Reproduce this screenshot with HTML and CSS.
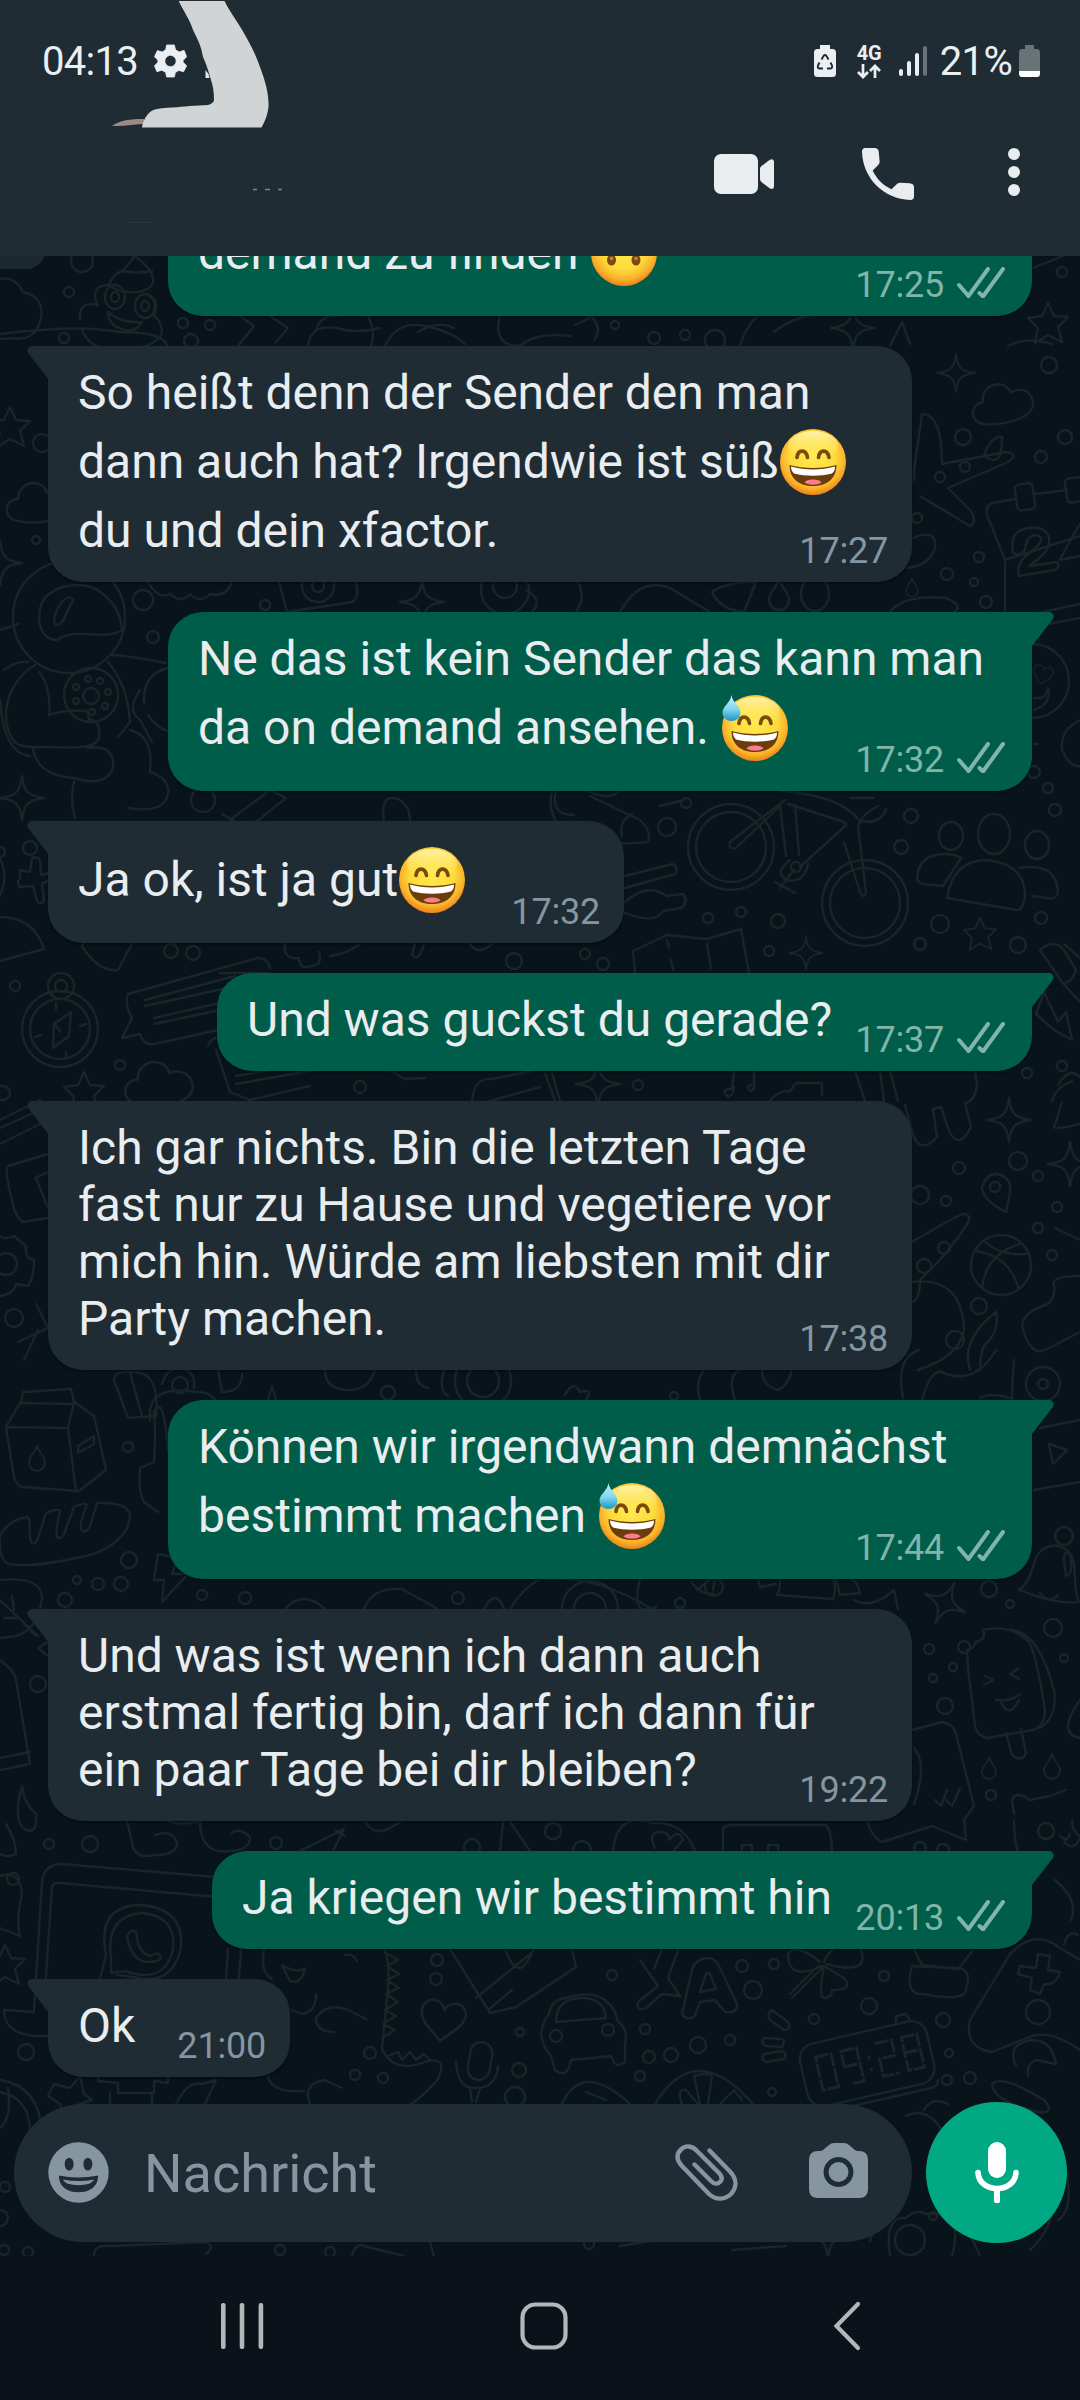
FILE: index.html
```html
<!DOCTYPE html>
<html lang="de">
<head>
<meta charset="utf-8">
<title>Chat</title>
<link rel="stylesheet" href="styles.css">
</head>
<body>
<svg class="defs" width="0" height="0" aria-hidden="true">
  <defs>
    <radialGradient id="face" cx="50%" cy="42%" r="56%">
      <stop offset="0" stop-color="#ffe94f"/><stop offset=".6" stop-color="#fddb3c"/><stop offset=".86" stop-color="#fbb22a"/><stop offset="1" stop-color="#f08a1c"/>
    </radialGradient>
    <linearGradient id="shine" x1="0" y1="0" x2="0" y2="1">
      <stop offset="0" stop-color="#fff3b0" stop-opacity=".95"/><stop offset="1" stop-color="#ffe94f" stop-opacity="0"/>
    </linearGradient>
    <linearGradient id="drop" x1="0" y1="0" x2="0" y2="1">
      <stop offset="0" stop-color="#c4f1fb"/><stop offset=".55" stop-color="#7fd6ee"/><stop offset="1" stop-color="#1795c4"/>
    </linearGradient>
    <symbol id="grin" viewBox="0 0 66 66">
      <circle cx="33" cy="33" r="33" fill="url(#face)"/>
      <ellipse cx="33" cy="17" rx="25" ry="15" fill="url(#shine)"/>
      <path d="M17 28.500c1-8.500 9-8.500 10.500 0M38.500 28.500c1-8.500 9-8.500 10.500 0" fill="none" stroke="#7c4a08" stroke-width="3.600" stroke-linecap="round"/>
      <path d="M9.500 36c14 4 33 4 47 0c0 14-10 21-23.500 21s-23.500-7-23.500-21z" fill="#6b3d0c"/>
      <path d="M11 37.500c14 4 30 4 44 0c0 4-1 5-3 7c-12 3-26 3-38 0c-2-2-3-4-3-7z" fill="#fff"/>
      <path d="M24.500 53.500c2-4 15-4 17 0c-5 3-12 3-17 0z" fill="#fb7c8c"/>
    </symbol>
    <symbol id="sweat" viewBox="0 0 66 66">
      <use href="#grin" width="66" height="66"/>
      <path d="M9.500 0c1 8 9 11 9 18a9 8 0 0 1-18 0c0-7 8-10 9-18z" fill="url(#drop)"/>
    </symbol>
    <symbol id="upside" viewBox="0 0 66 66">
      <circle cx="33" cy="33" r="33" fill="url(#face)"/>
      <ellipse cx="20.500" cy="40" rx="4.500" ry="5.500" fill="#7a4a10"/><ellipse cx="45" cy="40" rx="4.500" ry="5.500" fill="#7a4a10"/>
      <circle cx="20.500" cy="38.500" r="1.800" fill="#b98642"/><circle cx="45" cy="38.500" r="1.800" fill="#b98642"/>
      <path d="M16 22c7-10 27-10 34 0" fill="none" stroke="#7a4a10" stroke-width="3"/>
    </symbol>
    <symbol id="ticks" viewBox="0 0 48 31">
      <path d="M2 18l9.500 11L31 2M22.500 26l3.500 3.500L46 2" fill="none" stroke="#80b5a9" stroke-width="4" stroke-linecap="round" stroke-linejoin="miter"/>
    </symbol>
    <symbol id="tail" viewBox="0 0 22 34">
      <path d="M0 0H16.500C21 0 23 4 20.500 7.500L0 34z" fill="currentColor"/>
    </symbol>
    <path id="spark" d="M0-22C2-6 6-2 22 0C6 2 2 6 0 22C-2 6-6 2-22 0C-6-2-2-6 0-22z"/>
    <path id="star" d="M0-20l6 13 14 1-10 10 4 15-14-7-13 8 3-15-10-10 14-2z"/>
    <path id="cloud" d="M-24 18c-16-2-14-22 0-22c0-18 24-22 29-6c18-6 26 12 18 20c-6 8-28 12-47 8z"/>
    <path id="bolt" d="M-12-24l20 4-6 16h16l-26 28 2-22h-10z"/>
    <path id="dropline" d="M0-15c2 9 10 12 10 21a10 10 0 0 1-20 0c0-9 8-12 10-21z"/>
    <path id="heart" d="M0 20c-10-10-22-16-20-28c3-12 18-10 20 0c4-10 18-10 20 1c1 10-10 17-20 27z"/>
    <path id="bell" d="M-30 24c8-6 10-14 13-30c5-24 36-24 40 2c3 14 2 22 8 34c-20 4-40 0-61-6z"/>
  </defs>
</svg>

<div class="phone">
  <header class="header">
    <div class="status">
      <span class="clock">04:13</span>
      <svg class="gear" viewBox="0 0 34 34"><path fill-rule="evenodd" fill="#eceff1" stroke="#eceff1" stroke-width=".8" stroke-linejoin="round" d="M13 .5h8l1.200 5 3.800 2.200L31 6l2.600 6.500-3.600 3.900v2l3.600 3.600-3.100 6-5-1.300-3.500 2.200L21 33.500h-8l-1-4.800-4-2.200-5 1.500L.5 22 4 18.400v-2.200L.5 12.500 3.500 6.300 8.400 7.700 12 5.500zM17 11.200a5.800 5.800 0 1 0 .01 0z"/></svg>
      <div class="status-right">
        <svg class="saver" viewBox="0 0 22 32"><path fill="#eceff1" d="M6 0h10v4h2.500Q22 4 22 7.500v21Q22 32 18.500 32h-15Q0 32 0 28.500v-21Q0 4 3.500 4H6z"/><g fill="none" stroke="#1f2c34" stroke-width="1.900"><path d="M7.500 14.500l2-3.500q1.500-2 3 0l2 3.500M16.500 17.500l1.500 3q.8 3-2 3h-3M9 23.500H6q-3-.3-2-3l1.500-3"/></g></svg>
        <div class="net"><span>4G</span><svg viewBox="0 0 24 15"><path fill="none" stroke="#eceff1" stroke-width="2.700" d="M6 0v12M1 8l5 5 5-5M18 14V3M13 7l5-5 5 5"/></svg></div>
        <svg class="signal" viewBox="0 0 28 31"><g fill="#eceff1"><rect y="23" width="4" height="7" rx="2"/><rect x="8" y="15" width="4" height="15" rx="2"/><rect x="16" y="7" width="4" height="23" rx="2"/></g><rect x="24" width="4" height="30" rx="2" fill="#697277"/></svg>
        <span class="percent">21%</span>
        <svg class="battery" viewBox="0 0 21 32"><path fill="#697277" d="M6 0h9v4h3q3 0 3 4v18H0V8q0-4 3-4h3z"/><path fill="#fff" d="M0 26h21v2.500Q21 32 18 32H3q-3 0-3-3.500z"/></svg>
      </div>
    </div>
    <div class="toolbar">
      <svg class="video" viewBox="0 0 60 40"><rect width="44" height="40" rx="7" fill="#e9edef"/><path fill="#e9edef" d="M46 14.500q0-1.500 1.500-2.500l8-6Q60 4 60 8v24q0 4-4 2.500l-8-6Q46 27 46 25z"/></svg>
      <svg class="call" viewBox="3 3 18 18"><path fill="#e9edef" d="M3.900 3H7.400Q8.600 3 8.800 4.300L9.100 7.700Q9.100 8.400 8.600 8.900L6.700 10.800C8.200 13.900 10.100 15.800 13.200 17.300L15.100 15.500Q15.500 15 16.300 15L19.500 15.200Q21 15.300 21 16.700V19.700Q21 21 19.700 21C10.500 20.700 3.300 13.500 3 4.300Q3 3.200 3.900 3z"/></svg>
      <svg class="more" viewBox="0 0 12 48"><g fill="#e9edef"><circle cx="6" cy="6" r="6"/><circle cx="6" cy="24" r="6"/><circle cx="6" cy="42" r="6"/></g></svg>
    </div>
    <svg class="scribble" viewBox="0 0 300 270" aria-hidden="true">
      <path d="M0 250h52q-5 2-9 9t-13 10H0z" fill="#1c2930"/><path d="M0 240h60v16H0z" fill="#1f2c34"/>
      <path d="M0 117q60 9 110 10" fill="none" stroke="#232f37"/>
      <path d="M112 126c8-6 18-7 32-7v5c-9 0-13 2-32 2z" fill="#9c8988"/>
      <path d="M205.500 70v8h4l-1-4z" fill="#e4e7e8"/>
      <path d="M178.700 1H224.500C231 14 238 22 245 35C252 47 257 58 260 67C266 83 269 95 268.500 107C267 117 265 121 261.500 127.500H142C143 119 149 110 157 109C170 107 186 107 190 106L208 105Q214 103 214 100C214 92 213 86 211 80C209 73 206 63 203 57C201 45 197 38 193 30C190 20 184 12 178.700 1z" fill="#d0d4d5"/>
      <path d="M253 189.500h4M265 189.500h5M278 189.500h4" stroke="#7d878c" stroke-width="1.300"/>
      <path d="M128 222.500h22" stroke="#2c363d"/>
    </svg>
  </header>

  <main class="chat">
    <svg class="wallpaper" viewBox="0 256 1080 2000" aria-hidden="true">
      <g class="doodle">
        <path d="M-5 280q20-6 28 12q24 6 17 30q-6 20-30 16q-20 4-25-10"/>
        <path d="M122 271q10-10 12-15q10 6 17 16q6 12-4 17q-16 8-38-3q2-11 13-15q15 3 30 0M97 305q-7-20 12-20M80 320q-2-20 18-15M82 330q10 24 40 17q30 4 40-14q0-12-8-17q6-16-5-20M108 312q14 12 34 10q-8 12-20 7q-14-4-14-17"/>
        <ellipse cx="115" cy="297" rx="10" ry="12"/><ellipse cx="115" cy="297" rx="4" ry="5"/><ellipse cx="145" cy="306" rx="10" ry="12"/><ellipse cx="145" cy="306" rx="4" ry="5"/>
        <path d="M240 316l14 10-16 20M270 316l18 12-12 14M316 330q4-14 20-14M368 316q10 20 0 36M418 332q20-12 36-4M500 316q-8 30 20 30M575 325q14-6 16-9q12 12 3 24M740 346q8-26 24-34M774 332q20-16 40-16"/>
        <path d="M0 334q80-10 120-2 44 0 47 14M308 346q2-22 28-18 20 6 44 0M385 346q12-26 40-20t40 18M520 346q16-14 50-10M890 346l12-24 8 22M1008 346q18-10 44-2"/>
        <use href="#spark" x="853" y="328"/><use href="#star" x="1048" y="323"/><path d="M1033 268l30-12"/>
        <use href="#star" x="10" y="427"/><use href="#cloud" transform="translate(42 503)"/>
        <use href="#spark" x="0" y="563"/><use href="#spark" x="22" y="798"/>
        <circle cx="69" cy="617" r="56"/><path d="M122 630c-20 12-45-4-65 10c-20 0-22-30-12-42c15-16 45-18 60-2c10 8 16 20 17 34M54 622c0-10 8-22 13-24s8 2 4 6c-5 7-5 15-11 20q-5 2-6-2"/>
        <path d="M35 665c-18 10-33 35-28 60s18 22 40 22c20 0 50 4 52-10q2-16-10-18l-2-8q-20-2-38 4c2-20-3-35-10-43M112 655q12 0 54 8M108 662q20 24 22 60l-12 15M33 748q4 28 42 30q-6 20 0 40M75 778q30 10 38-10q2-24-25-20M130 730q24 6 20 42q20 6 18 22q-4 20-40 14M140 690q-14 20 0 30l12 22M168 668q-26 6-24 36M148 715q10 14 20 16M0 630l18-6M4 670q14-10 24-8M0 700q4 54 30 56"/>
        <circle cx="91" cy="695" r="27"/><circle cx="91" cy="696" r="8"/><circle cx="76" cy="687" r="3"/><circle cx="88" cy="679" r="3"/><circle cx="100" cy="681" r="3"/><circle cx="108" cy="692" r="3"/><circle cx="105" cy="706" r="3"/><circle cx="76" cy="701" r="3"/><circle cx="92" cy="712" r="3"/>
        <path d="M148 582q10 18 22 12q12 10 20 0q10 10 20 0q16 4 22-12M279 582l8 30 65-10q8-4 4-20"/><circle cx="318" cy="586" r="16"/><circle cx="318" cy="586" r="6"/>
        <use href="#spark" x="422" y="602"/><circle cx="505" cy="590" r="24"/><circle cx="505" cy="586" r="12"/><path d="M532 612q12-12-6-22M578 582q8 16-2 30M620 612q20-36 50-24l40 24M712 592q14-10 44-10l-12 30q-24-2-32-20z"/>
        <use href="#dropline" x="779" y="594"/><ellipse cx="815" cy="594" rx="14" ry="17"/><use href="#dropline" transform="translate(912 587) scale(.6)"/><path d="M890 612q14-18 56-14q18 8 8 14"/>
        <use href="#spark" transform="translate(956 373) scale(.85)"/><use href="#cloud" transform="translate(1007 403) rotate(-8)"/>
        <path d="M914 480v-10l8-56q20 0 20 50l64-12q14 2 2 10l-60 26 22 22q8 12 0 16l-50-30M984 455q8-20 18-18q0 12-2 18-6 10-16 0M913 538q24-10 22 10q-6 18-28 20"/>
        <path d="M1005 613V560l-18-45q-2-10 6-12l22-4M1035 494l32-4M1005 560l75-24M1005 620l75-16M1005 632l75-14"/>
        <rect x="1016" y="484" width="18" height="26" rx="4" transform="rotate(-8 1024 497)"/><rect x="1066" y="478" width="18" height="24" rx="4" transform="rotate(-8 1074 490)"/>
        <path d="M1013 552q-4-22 16-24q22-2 20 16q-2 10-20 22l28-4q4 5-2 8l-36 6q-4-14 14-26q12-10 6-14q-12-4-14 14q-8 8-12 2zM1080 524q-12 20-20 36l20-4"/>
        <circle cx="1032" cy="681" r="37"/><use href="#heart" transform="translate(1043 674) rotate(12) scale(.5)"/><path d="M1034 698q12 2 14-10q4 16-14 22"/>
        <path d="M1080 720q-20 10-18 30q8 18 18 16M1034 744h4"/>
        <path d="M230 820l40-30 16 8-30 24M222 814l14 8M384 821q-4-28 14-22 12 6 12 22M552 791q-4 18 4 30M620 791q-12 10-32 0M556 791q-6 24 18 24M590 796l50 24q12 12 8 22l-30 2M632 814q-14 8-10 22M660 806l24-6M780 791q60 4 80 30q20 4 26-12M850 798h24"/>
        <circle cx="731" cy="847" r="43"/><circle cx="731" cy="847" r="35"/><circle cx="865" cy="903" r="43"/><circle cx="865" cy="903" r="35"/>
        <path d="M785 800l-55 42q-2 8 6 6l44-42 6 50M795 805l4 50M788 804l56 18q4 2 0 5l-44 40M844 842l16 50q4 8 6 0l-8-66q4-12 20-20M790 860q-16 12-4 20q18 4 22-16M794 870l-14 18M775 882l20 11"/><circle cx="796" cy="867" r="5"/>
        <ellipse cx="994" cy="834" rx="16" ry="20"/><ellipse cx="951" cy="836" rx="12" ry="14"/><ellipse cx="1037" cy="845" rx="12" ry="14"/><path d="M947 898q6-38 40-38q38 4 38 36q-2 14-8 14zM917 878q2-24 28-24q10 0 16 4l-18 28-20-2q-6-2-6-6zM1020 868q36-6 38 24q-2 8-10 6l-16-2"/>
        <use href="#star" transform="translate(980 934) scale(.8)"/><use href="#spark" transform="translate(806 953) scale(.75)"/>
        <path d="M625 876l48-12q6 4 2 10l-50 14M625 902q22-20 42-6l16-2q6 8-2 14l-18 3q-8 14-38 2M635 973l-2-22 34-16 40 4 34-10 8 44M667 940l2 8M671 960l2 10M707 944l4 24"/>
        <path d="M1040 950q14-12 24 0l12 20q-6 16-14 12zM1064 944l16 14M1060 980l20 22M1044 992l14 30 8-10 6 28-18-10-18-16z"/>
        <path d="M20 870l10 2 2-14q6-2 8 2l1 15 12-3q2 8-4 9l-7 2 2 18q-4 4-7 0l-4-15-13 1q-4-6 0-8zM0 858q10 20-3 44M0 917q34 0 44 32l-44 12M82 946l10-20 42 14-16 30q-20 2-36-24M285 944q-2 16 14 14q0 12 12 8q12 0 8-14M330 956q16-2 30-12M415 944l-3 10q6 10 12-10M470 944q8 12 22 0"/>
        <circle cx="60" cy="1029" r="38"/><circle cx="60" cy="1029" r="30"/><circle cx="61" cy="986" r="13"/><circle cx="61" cy="986" r="6"/><path d="M71 1012l-2 24-16 12 1-24zM60 1031l-6-8M56 1003v6M66 1052v6M35 1037l6-2M86 1024l-6 2"/>
        <path d="M220 973l48 0M128 994l130-36q10 0 12 10M128 994q-4 10 4 24l-10 20 18-4q4 12 14 10l64-14M145 1000l90-24M145 1006l100-22M154 1018l70-16M154 1024l66-14"/>
        <use href="#cloud" transform="translate(164 1084) scale(1.1)"/><path d="M208 1046q6-14 18-4M216 1050l14 42 20 8 60-14M236 1076l80-14M236 1084l90-16"/><use href="#star" transform="translate(84 1092)"/>
        <path d="M391 1071l14 8 20-1M472 1101q2-24 20-22l40-8M490 1101l50-14"/>
        <use href="#spark" transform="translate(598 1084)"/><path d="M545 1073l10 28M552 1073l8 28M734 1071l-2 18q-12 0-4 8q6-2 6-10M754 1071v14q-10 0-4 6q6-2 4-6M770 1101q6-10 20-10l6-8h26v12M855 1071l10 30M880 1071l4 30M890 1071l8 30M975 1071l2 14q-2 16-12 18l6 24q-12 24-22 4l-8-24-8 2 4 28q-16 18-24-2l-8-30"/>
        <use href="#spark" transform="translate(1009 1120)"/><path d="M1058 1085q14-24 28 0M1052 1101q4-14 20-20M1054 1128l8-26M1058 1128q10 0 26-6"/><circle cx="1062" cy="1066" r="5"/>
        <use href="#spark" transform="translate(1070 1164)"/><path d="M982 1187q4-14 16-13q14 4 12 18l-4 20q-24-12-24-25z"/><circle cx="995" cy="1187" r="5"/>
        <circle cx="1001" cy="1265" r="30"/><path d="M975 1251q34 4 44 38M1020 1244q-34 10-38 44M984 1240q14 16 42 14"/>
        <path d="M912 1242q30-18 50-28q12 0 4 12q-20 30-46 54q0 20-8 22M912 1282q50-6 52 48q-4 26-46 40M970 1370q-10-30 26-58q4 20-12 34q-4 10-4 24M1055 1228l25 12M1080 1276q-30 0-26 10q2 10-6 18q-30 10-25 26q8 26 22 20l35-18"/><circle cx="944" cy="1248" r="6"/><circle cx="924" cy="1266" r="7"/><circle cx="955" cy="1340" r="9"/>
        <path d="M0 1120l40-20M0 1128l40-18M0 1144l48-24M8 1166l40-12M8 1166q-4 4 4 34q2 14 10 22l26-4M35 1178l13-6M36 1178l12 30"/>
        <path d="M0 1236q4 4 14 0l12 10q-2 12 8 14q0 18-6 26l-12-2q-2 10-16 12"/><circle cx="6" cy="1264" r="11"/><path d="M18 1342l30-14M36 1304l12 24M24 1360l14-30"/>
        <path d="M325 1370q0 20 24 20q20 0 26-20"/><circle cx="483" cy="1381" r="28"/><circle cx="483" cy="1381" r="16"/><path d="M416 1370q0 16 12 18M444 1370q-6 20 4 26"/>
        <path d="M21 1404l2-12 48-3 3 13 20 14 12 54-27 21-57-4q-6-2-8-10l-8-50 14-24 52 1M6 1427l62 1 8 63M68 1428l6-26M78 1446l16-10v8l-16 9z"/><use href="#dropline" transform="translate(37 1458) scale(.8)"/>
        <path d="M0 1536Q8 1520 27 1517C32 1518 28 1532 31 1542Q35 1546 38 1538L46 1513Q58 1508 60 1511C58 1520 55 1530 57 1537Q61 1540 64 1534L74 1507Q84 1502 87 1505C83 1514 79 1526 82 1531Q87 1533 90 1526L97 1503Q126 1502 130 1514C130 1538 104 1554 76 1558Q30 1568 8 1564Q-2 1558 0 1536z"/>
        <use href="#bolt" transform="translate(170 1578)"/><circle cx="129" cy="1560" r="8"/><circle cx="77" cy="1580" r="4"/><circle cx="98" cy="1584" r="6"/><circle cx="121" cy="1584" r="7"/><circle cx="65" cy="1600" r="7"/>
        <path d="M0 1580q42-4 42 18q-4 32-26 38l-16 2M0 1600l38 36M14 1610l-2-14M18 1618h-14M24 1624l12 12M48 1656l-10-8 10-6"/>
        <path d="M114 1380q0-10 20-8q26 0 22 44l-28 2zM150 1420q-4-36 46-28q16 0 20 10M130 1372l12 44M162 1384q6-20 24-14q10 4 8 18M218 1370l4 22q20 0 20-18M168 1452q-4-60-14-40q2 16 0 50l-14 6q-2 24 4 34l14 10M268 1400l4-14 4 14"/><circle cx="180" cy="1385" r="8"/>
        <path d="M565 1395q8-16 15-3q14-4 6 8M700 1400q-6-20 6-32M735 1400q-10-30 12-32M762 1370q0 16 16 20q10-4 14-20M903 1398q-8-40 16-48M922 1400q10-36 24-26q30 10 50-24M1010 1398q-20-6-30 0M1012 1400q0-20 2-40"/>
        <circle cx="1043" cy="1384" r="17"/><circle cx="1043" cy="1384" r="5"/><path d="M1040 1428l40-8M1049 1444l18 6-14 14zM1034 1490l46-8"/>
        <path d="M285 1609q18-20 40 0M364 1609q8-22 38-20l36 20M484 1609q12-22 20 0M510 1609q14-22 30-30M546 1579q50-4 106 30"/><circle cx="590" cy="1609" r="28"/><circle cx="590" cy="1609" r="16"/><path d="M640 1579q-10 40 16 28M692 1582q6 12 22 12M697 1590l12-10M713 1590l2-11M758 1579l2 8 16-3M780 1579q0 12-3 16l56 4q4-12 0-20M836 1579l4 16 20-2q-2-10-8-14M854 1600q18 10 40-10l4 19"/><circle cx="714" cy="1587" r="9"/>
        <use href="#bell" transform="translate(1051 1569) rotate(6)"/><circle cx="1064" cy="1536" r="9"/><path d="M1040 1593q8 12 18 2M1064 1560q0-10 6-6q4 20-4 22z"/>
        <use href="#spark" transform="translate(945 1603) rotate(25)"/>
        <path d="M968 1668l-1-18q8-2 8-8q12-2 8-12q26-6 44 10q8 6 18 70q0 16-12 20l-46 8q-10-2-12-12zM1010 1630q28 0 44 60q4 26-14 38M985 1676l8 4-9 5M1018 1669l-8 5 9 5M996 1700q14 2 24-6M1001 1702q8 18 18-2M1006 1733l6 22q10 8 14-2l-5-24M1080 1700q-24 34 0 38"/>
        <use href="#dropline" transform="translate(989 1768) scale(.7)"/><use href="#dropline" transform="translate(1052 1766) scale(.8)"/><circle cx="991" cy="1795" r="5"/>
        <path d="M912 1730l30-8q12 2 14 12l18 72-10 14 2 20-34-14-50 16q-10-4-16-24M935 1800l6 6 6-16M946 1800l6 6 8-18M914 1748q14 16 0 56M1014 1814l-2-14q4-10 18 0l20-4 16-6M1014 1820q0 44 20 54M1080 1836q-8-4-8-16"/><circle cx="1046" cy="1831" r="8"/><path d="M1060 1836l6 4 4-6M1064 1842q10 10 16-4M1055 1880q24 20 16 40M1064 1945q4-16 14-10"/>
        <path d="M0 1660q14 10 16 20l14 84-30 6M0 1758l30-6M22 1786q2 18 14 28q2 20-10 16q-14-8-4-44zM6 1824q10 16 10 30q-8 4-16 0M127 1821l6 26q4 12 22 8q22 0 22-12q-4-14-22-8M200 1821q0 34 30 30q20 0 20-14q-10-10-18-4M167 1821q16 6 40-2M300 1851l44-22-12 24M335 1830l10 6M365 1821q10 20 36 0M500 1851l4-38 26 38"/><circle cx="276" cy="1843" r="6"/><circle cx="90" cy="1844" r="8"/><circle cx="49" cy="1844" r="5"/>
        <path d="M613 1851q4-40 40-28q30-2 42 28M655 1848q-8-16 6-16q8 0 8 8q10-12 14 0l-10 11M723 1851v-20q0-6 10-6h92q6 2 7 26M742 1851v-6h10v6M768 1851v-6h10v6"/><circle cx="553" cy="1831" r="8"/><circle cx="582" cy="1850" r="9"/><circle cx="920" cy="1848" r="6"/><circle cx="943" cy="1850" r="6"/>
        <path d="M34 2010l8-128q2-18 20-18l190 16M44 2004l8-116q0-6 8-5l180 16M4 2010q0 28 44 26M4 2010l30 2M228 1949l-2 30M241 1949l-2 30M0 1876q20-6 22 18q-6 24-2 42l-20-8"/><circle cx="13" cy="1879" r="6"/><path d="M100 1979l6-24q-10-50 36-50q42 4 39 42q-8 40-48 30l-16-2M111 1959q-6-44 32-46q34 4 30 36q-8 36-48 22l-14 2zM127 1936q4-8 9-4l2 12q4 10 12 12l8-3q6 6-2 8q-24 6-29-25z"/>
        <use href="#star" transform="translate(5 1965)"/><circle cx="26" cy="2052" r="8"/>
        <path d="M264 1949q-4 24 8 30M282 1965q12 8 23 4q-4 16-15 12zM345 1955q8-2 12 6M316 1994q0 18-14 20l-10-4M334 2032q-18 0-18-14q10-16 32-8l18 9M384 1949q6 10 4 40l-6 60q12 26 46 12q20-4 10 18q-20 24-40 32M388 1954l10 6-11 6 12 8-12 6 12 8-13 6 12 8-13 8 11 6-13 8 12 6-13 8M388 2056l10-4 4 8 8-8 6 8 8-6 6 6M268 2077q4 16 36 14M310 2104q-8-20 14-24l18 8"/>
        <circle cx="437" cy="1960" r="6"/><circle cx="436" cy="1979" r="6"/><use href="#heart" transform="translate(443 2019) rotate(8) scale(1.100)"/>
        <path d="M450 1949l40 64 26-6 60-40-4-18M476 1998l54-44M488 2010l24-20M505 1949q14 40 30-4"/><rect x="469" y="2042" width="22" height="38" rx="11" transform="rotate(10 480 2061)"/><path d="M456 2062q2 28 20 26q20 0 22-22M470 2088l2 14M480 2088l-4 14"/><circle cx="519" cy="2070" r="7"/><circle cx="515" cy="2097" r="10"/><circle cx="520" cy="2032" r="4"/>
        <path d="M0 2080q40 6 42 54l-10 28M0 2092q30 6 30 40M0 2128q12-10 8-40M54 2084l16 4 10-12 4 18 8 6-18 6-8 14-6-16-12-8zM98 2077v4l20 2v10h36v-12l14 2v-6M110 2104v-12M152 2104v-10M176 2104q12-24 26-20l14-4-12 26"/>
        <path d="M541 2034q2-14 8-20q2-14 16-16q26-8 40 2q12 10 12 20q12 10 8 24v18q-10 8-14-6l-40 4q-4 20-16 10l-4-14q-8-8-10-22M556 2022q0-24 26-24q22 0 24 20z"/><circle cx="556" cy="2036" r="6"/><circle cx="608" cy="2030" r="6"/>
        <path d="M682 2014l10-44q4-12 16-12q8 0 12 10l17 36q0 10-12 8l-10-12-15 2-5 14q-8 6-13-2zM700 1992l6-18q2-2 4 0l6 15zM640 1960l18 26-20 16q-2 10 8 6l16-14 18 2-12-18 10-28M662 1949l-8 20"/>
        <path d="M820 1962q-24-20-32-8q0 28 34 12M824 1962q10-24 36-14q12 28-34 16M824 1966q-6 32 0 32q8 0 8-8q22 0 12-12zM818 1966l-28 28M792 1998l30-30"/>
        <path d="M914 1949l8 16 36 4 16-20M912 1966q-8 30 12 28q40 8 42-4q8-24-14-22z"/><circle cx="869" cy="2006" r="8"/><circle cx="943" cy="2020" r="7"/>
        <path d="M970 2020l40-66q24-26 50-6l20 12M970 2020q-6 28 22 32l40-16q20-6 48 14M1020 1966l16 2 2-14 12 2-2 14 12 2q-4 14-16 12l-4 10-10-4 2-12-14-4z"/><circle cx="1038" cy="2012" r="12"/>
        <g transform="rotate(-13 866 2063)"><rect x="802" y="2032" width="130" height="64" rx="16"/><path d="M820 2102h106q6-2 6-6M904 2030l2-6h10l2 6"/><path class="digits" d="M818 2046h16v34h-16zM844 2062v-16h16v34h-14M844 2062h14M870 2058v1M870 2070v1M880 2046h16v16h-16v18h16M906 2046h16v34h-16zM906 2062h16"/></g>
        <path d="M770 2020l14 10q8 0 4-8l-16-12q-6 4-2 10zM764 2038q-4 6 2 8l16 1q4-6 0-8zM764 2054q-4 6 2 8l18-3q4-6-2-8z"/><path d="M1016 2066q-10-22 16-26q20 0 24 24l-20-4q-10 4-8 16M992 2084q10-10 52 16q12 14-6 12q-44-10-46-28z"/>
        <path d="M562 2104q20-44 68 0M586 2092l20 8M655 2104q40-66 98 0M682 2104q-6-16 4-14l12 14M700 2104l-6-28q12-4 18 0l-4 28M720 2104l14-14 8 10"/>
        <path d="M906 2116q20-10 36 14M924 2110q8-14 24-6M1050 2180q12 40-20 70M1066 2170q8 40-8 50M870 2242q6-20 0-8M890 2256q-6-40 16-38q10-10 20-4l22 0q12 14 4 42M94 2256q0-12 16-10l96-4q10 4 0 12M352 2256q4-14 12-10l40 10M430 2242l4 14M620 2246l60-10M732 2250l54-4M980 2256l-12-26"/><circle cx="910" cy="2240" r="15"/><circle cx="933" cy="2216" r="4"/><use href="#spark" transform="translate(828 2236)"/>
      </g>
      <g class="doodle">
        <circle cx="82" cy="261" r="11"/><circle cx="69" cy="292" r="5"/><circle cx="183" cy="323" r="5"/><circle cx="210" cy="325" r="5"/><circle cx="1062" cy="272" r="5"/><circle cx="64" cy="338" r="5"/><circle cx="191" cy="341" r="7"/><circle cx="615" cy="325" r="4"/><circle cx="654" cy="338" r="6"/><circle cx="685" cy="335" r="5"/><circle cx="715" cy="340" r="10"/><circle cx="42" cy="443" r="9"/><circle cx="36" cy="540" r="4"/><circle cx="143" cy="600" r="10"/><circle cx="153" cy="637" r="6"/><circle cx="265" cy="605" r="5"/><circle cx="203" cy="800" r="12"/><circle cx="1049" cy="365" r="8"/><circle cx="963" cy="437" r="8"/><circle cx="1065" cy="437" r="7"/><circle cx="1041" cy="457" r="6"/><circle cx="965" cy="467" r="5"/><circle cx="940" cy="477" r="5"/><circle cx="917" cy="518" r="5"/><circle cx="979" cy="557" r="5"/><circle cx="947" cy="574" r="6"/><circle cx="974" cy="582" r="4"/><circle cx="986" cy="602" r="6"/><circle cx="1034" cy="772" r="6"/><circle cx="1048" cy="788" r="5"/><circle cx="686" cy="803" r="5"/><circle cx="667" cy="827" r="9"/><circle cx="911" cy="816" r="7"/><circle cx="901" cy="847" r="7"/><circle cx="1055" cy="810" r="6"/><circle cx="940" cy="924" r="9"/><circle cx="920" cy="944" r="6"/><circle cx="1018" cy="945" r="8"/><circle cx="1041" cy="918" r="6"/><circle cx="778" cy="921" r="7"/><circle cx="708" cy="918" r="5"/><circle cx="741" cy="912" r="5"/><circle cx="603" cy="964" r="6"/><circle cx="585" cy="954" r="5"/><circle cx="769" cy="951" r="5"/><circle cx="30" cy="848" r="7"/><circle cx="0" cy="852" r="5"/><circle cx="171" cy="951" r="7"/><circle cx="193" cy="953" r="7"/><circle cx="514" cy="961" r="8"/><circle cx="15" cy="986" r="5"/><circle cx="120" cy="1065" r="5"/><circle cx="3" cy="1093" r="7"/><circle cx="360" cy="1087" r="6"/><circle cx="638" cy="1085" r="5"/><circle cx="1027" cy="1073" r="5"/><circle cx="1018" cy="1161" r="9"/><circle cx="959" cy="1168" r="6"/><circle cx="1038" cy="1176" r="5"/><circle cx="920" cy="1195" r="9"/><circle cx="946" cy="1201" r="5"/><circle cx="1057" cy="1207" r="5"/><circle cx="1038" cy="1228" r="5"/><circle cx="1052" cy="1255" r="5"/><circle cx="979" cy="1306" r="8"/><circle cx="14" cy="1318" r="9"/><circle cx="128" cy="1447" r="5"/><circle cx="388" cy="1393" r="7"/><circle cx="674" cy="1396" r="4"/><circle cx="202" cy="1595" r="5"/><circle cx="245" cy="1598" r="6"/><circle cx="458" cy="1598" r="6"/><circle cx="680" cy="1603" r="5"/><circle cx="989" cy="1589" r="8"/><circle cx="1010" cy="1604" r="4"/><circle cx="1053" cy="1628" r="9"/><circle cx="1064" cy="1658" r="4"/><circle cx="929" cy="1649" r="5"/><circle cx="964" cy="1647" r="6"/><circle cx="953" cy="1667" r="4"/><circle cx="933" cy="1678" r="4"/><circle cx="945" cy="1706" r="8"/><circle cx="38" cy="1684" r="8"/><circle cx="472" cy="1847" r="8"/><circle cx="370" cy="2053" r="6"/><circle cx="355" cy="2075" r="5"/><circle cx="383" cy="2078" r="5"/><circle cx="612" cy="1975" r="5"/><circle cx="742" cy="1966" r="6"/><circle cx="774" cy="1964" r="5"/><circle cx="753" cy="1990" r="9"/><circle cx="884" cy="1976" r="5"/><circle cx="814" cy="2019" r="5"/><circle cx="645" cy="2029" r="5"/><circle cx="698" cy="2045" r="8"/><circle cx="730" cy="2040" r="5"/><circle cx="649" cy="2057" r="6"/><circle cx="671" cy="2055" r="7"/><circle cx="640" cy="2076" r="5"/><circle cx="949" cy="2053" r="4"/><circle cx="947" cy="2080" r="5"/><circle cx="970" cy="2078" r="6"/><circle cx="772" cy="2092" r="4"/><circle cx="5" cy="2187" r="5"/><circle cx="0" cy="2218" r="8"/><circle cx="4" cy="2250" r="5"/><circle cx="28" cy="2252" r="5"/><circle cx="280" cy="2250" r="5"/><circle cx="330" cy="2252" r="5"/><circle cx="589" cy="2244" r="5"/>
      </g>
    </svg>

    <section class="messages">
      <article class="bubble out wide"><div class="text"><p class="tall"><span>demand zu finden </span><svg class="emoji"><use href="#upside"/></svg></p></div><div class="meta">17:25<svg class="ticks"><use href="#ticks"/></svg></div></article>
      <article class="bubble in wide"><svg class="tail"><use href="#tail"/></svg><div class="text"><p>So heißt denn der Sender den man</p><p class="tall"><span>dann auch hat? Irgendwie ist süß</span><svg class="emoji"><use href="#grin"/></svg></p><p>du und dein xfactor.</p></div><div class="meta">17:27</div></article>
      <article class="bubble out wide"><svg class="tail"><use href="#tail"/></svg><div class="text"><p>Ne das ist kein Sender das kann man</p><p class="tall"><span>da on demand ansehen. </span><svg class="emoji"><use href="#sweat"/></svg></p></div><div class="meta">17:32<svg class="ticks"><use href="#ticks"/></svg></div></article>
      <article class="bubble in w-gut"><svg class="tail"><use href="#tail"/></svg><div class="text"><p class="tall"><span>Ja ok, ist ja gut</span><svg class="emoji"><use href="#grin"/></svg></p></div><div class="meta">17:32</div></article>
      <article class="bubble out w-gerade"><svg class="tail"><use href="#tail"/></svg><div class="text"><p>Und was guckst du gerade?</p></div><div class="meta">17:37<svg class="ticks"><use href="#ticks"/></svg></div></article>
      <article class="bubble in wide"><svg class="tail"><use href="#tail"/></svg><div class="text"><p>Ich gar nichts. Bin die letzten Tage</p><p>fast nur zu Hause und vegetiere vor</p><p>mich hin. Würde am liebsten mit dir</p><p>Party machen.</p></div><div class="meta">17:38</div></article>
      <article class="bubble out wide"><svg class="tail"><use href="#tail"/></svg><div class="text"><p>Können wir irgendwann demnächst</p><p class="tall"><span>bestimmt machen </span><svg class="emoji"><use href="#sweat"/></svg></p></div><div class="meta">17:44<svg class="ticks"><use href="#ticks"/></svg></div></article>
      <article class="bubble in wide"><svg class="tail"><use href="#tail"/></svg><div class="text"><p>Und was ist wenn ich dann auch</p><p>erstmal fertig bin, darf ich dann für</p><p>ein paar Tage bei dir bleiben?</p></div><div class="meta">19:22</div></article>
      <article class="bubble out w-hin"><svg class="tail"><use href="#tail"/></svg><div class="text"><p>Ja kriegen wir bestimmt hin</p></div><div class="meta">20:13<svg class="ticks"><use href="#ticks"/></svg></div></article>
      <article class="bubble in w-ok"><svg class="tail"><use href="#tail"/></svg><div class="text"><p>Ok</p></div><div class="meta">21:00</div></article>
    </section>

    <footer class="composer">
      <div class="field">
        <svg class="smile" viewBox="0 0 62 62"><circle cx="31" cy="31" r="30.700" fill="#8696a0"/><g fill="#1f2c34"><ellipse cx="21.500" cy="22.500" rx="4.500" ry="6.500"/><ellipse cx="40.500" cy="22.500" rx="4.500" ry="6.500"/><path d="M11 34q20 4 40 0c0 11-8 17-20 17s-20-6-20-17z"/></g><path d="M15 38q16 3.500 32 0q-2 3-5 4.500q-11 3-22 0Q17 41 15 38z" fill="#8696a0"/></svg>
        <span class="placeholder">Nachricht</span>
        <svg class="clip" viewBox="0 0 64 58"><path fill="none" stroke="#8696a0" stroke-width="4.400" stroke-linecap="round" stroke-linejoin="round" d="M34.500 6.500L55 27.500C62 35 62 43 56.500 49.500C50 56 41 56.500 34 50L6.500 21.500C1 15.500 1.500 9.500 6 5.500C10.500 1 17 1.500 21.500 6.500L44.500 29.500C47.500 33 47 36 45 38C43 40 39.500 40.500 36.500 37.500L19.500 20.500"/></svg>
        <svg class="camera" viewBox="0 0 59 55"><path fill="#8696a0" fill-rule="evenodd" d="M20 2Q22 0 25 0h10q3 0 5 2l6 5q1 1 3 1h1q9 0 9 9v29q0 9-9 9H9q-9 0-9-9V17Q0 8 9 8h2q2 0 3-1zM29.500 14a15 15 0 1 0 .01 0z"/><circle cx="29.500" cy="29" r="10" fill="#8696a0"/></svg>
      </div>
      <div class="mic"><svg viewBox="0 0 44 61"><rect x="13" width="18" height="36" rx="9" fill="#fff"/><path d="M3 30.500C4 52 40 52 41 30.500" fill="none" stroke="#fff" stroke-width="5.600" stroke-linecap="round"/><path d="M22 47v11.500" stroke="#fff" stroke-width="6" stroke-linecap="round"/></svg></div>
    </footer>
  </main>

  <nav class="nav">
    <svg class="recents" viewBox="0 0 43 46"><g fill="#b4b7b9"><rect width="4.600" height="46" rx="2"/><rect x="18.700" width="4.600" height="46" rx="2"/><rect x="37.600" width="4.600" height="46" rx="2"/></g></svg>
    <svg class="home" viewBox="0 0 48 48"><rect x="2.500" y="2.500" width="43" height="43" rx="13" fill="none" stroke="#b4b7b9" stroke-width="4.200"/></svg>
    <svg class="back" viewBox="0 0 28 50"><path d="M25 3L3.500 25 25 47" fill="none" stroke="#b4b7b9" stroke-width="4.200" stroke-linecap="round"/></svg>
  </nav>
</div>
</body>
</html>
```
FILE: styles.css
```css
* { box-sizing: border-box; }

body {
  margin: 0;
  background: #0b1217;
  font-family: Roboto, "Liberation Sans", sans-serif;
}

svg { display: block; flex: none; }
p { margin: 0; }
.defs { position: absolute; }

.phone {
  width: 1080px;
  height: 2400px;
  display: flex;
  flex-direction: column;
  overflow: hidden;
}

/* header */
.header {
  position: relative;
  z-index: 2;
  flex: none;
  height: 256px;
  background: #1f2c34;
}

.status {
  display: flex;
  align-items: center;
  height: 122px;
  padding: 0 40px 0 42px;
  color: #eceff1;
}

.clock, .percent { padding-top: 2px; font-size: 40px; line-height: 46px; letter-spacing: -0.7px; }
.gear { width: 33px; height: 34px; margin-left: 16px; }
.status-right { display: flex; align-items: center; margin-left: auto; }
.saver { width: 22px; height: 32px; margin-right: 21px; }

.net {
  width: 25px;
  height: 33px;
  margin-right: 17px;
  font-size: 20px;
  font-weight: 700;
  line-height: 17px;
  letter-spacing: -0.3px;
}
.net svg { width: 24px; height: 15px; margin-top: 2px; }
.signal { width: 28px; height: 31px; margin-right: 13px; }
.percent { margin-right: 7px; }
.battery { width: 21px; height: 32px; }

.toolbar {
  display: flex;
  align-items: center;
  justify-content: flex-end;
  height: 104px;
  padding-right: 60px;
}
.video { width: 60px; height: 40px; margin-right: 88px; }
.call { width: 52px; height: 52px; margin-right: 94px; }
.more { width: 12px; height: 48px; margin-top: -4px; }

.scribble { position: absolute; left: 0; top: 0; width: 300px; height: 270px; }

/* chat */
.chat {
  position: relative;
  flex: none;
  height: 2000px;
  display: flex;
  flex-direction: column;
  justify-content: flex-end;
  overflow: hidden;
  background: #081419;
}

.wallpaper { position: absolute; inset: 0; width: 1080px; height: 2000px; }
.doodle { fill: none; stroke: #182529; stroke-width: 2.4; stroke-linejoin: round; stroke-linecap: round; }
.digits { stroke-dasharray: 12 4; stroke-width: 3; }

.messages {
  position: relative;
  display: flex;
  flex-direction: column;
  gap: 30px;
  padding: 0 48px;
}

.bubble {
  position: relative;
  display: grid;
  flex: none;
  padding: 18px 0 0 30px;
  border-radius: 35px;
  color: #e9edef;
  box-shadow: 0 2px 2px rgba(0, 0, 0, 0.35);
}
.bubble > .text, .bubble > .meta { grid-area: 1 / 1; }

.in { align-self: flex-start; background: #1f2c34; border-top-left-radius: 0; }
.out { align-self: flex-end; background: #005d4a; border-top-right-radius: 0; }
.wide { width: 864px; }
.w-gut { width: 576px; }
.w-gerade { width: 815px; }
.w-hin { width: 820px; }
.w-ok { width: 242px; }

.tail { position: absolute; top: 0; width: 22px; height: 34px; }
.out .tail { left: calc(100% - 0.5px); color: #005d4a; }
.in .tail { right: calc(100% - 0.5px); color: #1f2c34; transform: scaleX(-1); }

.text {
  padding-bottom: 23px;
  font-size: 48px;
  line-height: 57px;
  white-space: pre;
}
.tall { display: flex; align-items: center; height: 81px; }
.emoji { width: 66px; height: 66px; margin-left: 1px; }

.meta {
  display: flex;
  align-items: flex-end;
  align-self: end;
  justify-self: end;
  padding: 0 24px 10px 0;
  font-size: 36px;
  line-height: 42px;
  letter-spacing: -0.2px;
  color: #8696a0;
}
.out .meta { padding-right: 23px; color: #80b5a9; }
.ticks { width: 48px; height: 31px; margin: 0 4px 8px 13px; }

/* composer */
.composer {
  position: relative;
  display: flex;
  align-items: center;
  height: 141px;
  margin: 25px 13px 13px 14px;
}

.field {
  display: flex;
  align-items: center;
  width: 898px;
  height: 138px;
  padding: 0 44px 0 34px;
  border-radius: 69px;
  background: #1f2c34;
}
.smile { width: 61px; height: 61px; }
.placeholder { margin-left: 35px; padding-top: 3px; font-size: 54px; line-height: 64px; color: #8696a0; }
.clip { width: 64px; height: 58px; margin-left: auto; margin-right: 70px; }
.camera { width: 59px; height: 55px; margin-top: -5px; }

.mic {
  display: flex;
  align-items: center;
  justify-content: center;
  width: 141px;
  height: 141px;
  margin-left: auto;
  border-radius: 50%;
  background: #00a884;
}
.mic svg { width: 44px; height: 61px; }

/* navigation */
.nav {
  flex: none;
  display: flex;
  align-items: center;
  height: 144px;
  padding: 0 0 5px 221px;
  background: #0b1219;
}
.recents { width: 43px; height: 46px; }
.home { width: 48px; height: 48px; margin-left: 256px; }
.back { width: 28px; height: 50px; margin-left: 265px; }
```
